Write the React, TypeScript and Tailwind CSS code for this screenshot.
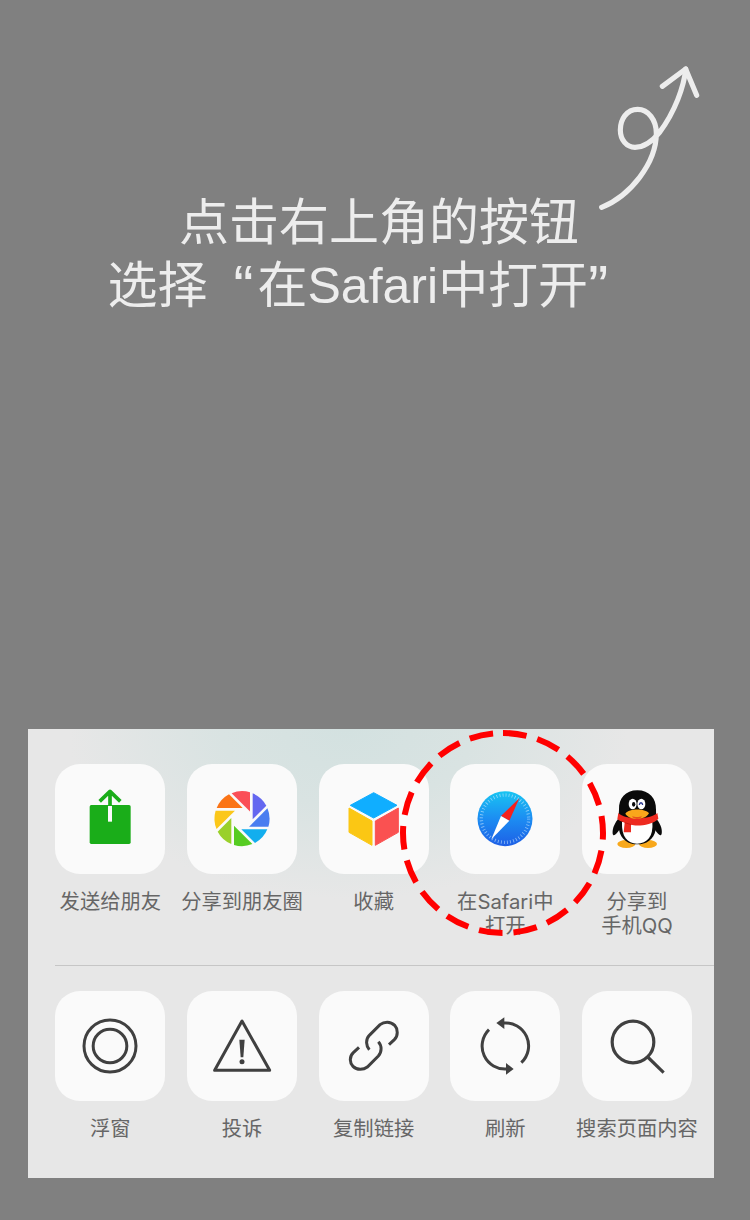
import type { ReactNode } from "react";

const BLADES = ["#6467f0", "#4a7df0", "#12aeee", "#56cc22", "#9ad02a", "#fbc71a", "#fb7416", "#fa4f57"];

function Tile({ children }: { children: ReactNode }) {
  return (
    <div className="h-[110px] w-[110px] rounded-[25px] bg-[#fafafa]">
      <svg viewBox="0 0 330 330" className="block h-full w-full" fill="none">
        {children}
      </svg>
    </div>
  );
}

function SendIcon() {
  return (
    <Tile>
      <rect x="104" y="123" width="123" height="117" rx="5" fill="#1aad19" />
      <path d="M165 84V126M134 112L165 82L196 112" stroke="#1aad19" strokeWidth="11" strokeLinejoin="round" />
      <path d="M165 126V173" stroke="#fafafa" strokeWidth="12" />
    </Tile>
  );
}

function MomentsIcon() {
  return (
    <Tile>
      {BLADES.map((color, i) => (
        <path
          key={color}
          d="M32 -76A82 82 0 0 1 73 -39L32 2Z"
          fill={color}
          transform={`translate(165 164) rotate(${i * 45})`}
        />
      ))}
    </Tile>
  );
}

function FavoriteIcon() {
  return (
    <Tile>
      <g strokeLinejoin="round" strokeWidth="3">
        <path d="M164 86L234 124L164 162L94 124Z" fill="#10aeff" stroke="#10aeff" />
        <path d="M90 132L159 171V244L90 205Z" fill="#fbc714" stroke="#fbc714" />
        <path d="M169 171L238 132V205L169 244Z" fill="#fa5151" stroke="#fa5151" />
      </g>
    </Tile>
  );
}

function SafariIcon() {
  return (
    <Tile>
      <defs>
        <linearGradient id="compass" x1="0" y1="0" x2="0" y2="1">
          <stop offset="0" stopColor="#19c5f2" />
          <stop offset="0.5" stopColor="#1c8df2" />
          <stop offset="1" stopColor="#1e5fe6" />
        </linearGradient>
      </defs>
      <circle cx="165" cy="164" r="82.5" fill="url(#compass)" />
      <circle cx="165" cy="164" r="71" stroke="#d5efff" strokeOpacity="0.6" strokeWidth="10" strokeDasharray="2.5 6.79" />
      <path d="M208 103L153 156L178 170Z" fill="#f5201d" />
      <path d="M124 226L153 156L178 170Z" fill="#ffffff" />
    </Tile>
  );
}

function QQIcon() {
  return (
    <Tile>
      <g transform="translate(-246 -131)">
        <ellipse cx="379" cy="371" rx="27" ry="12" fill="#f8a81b" />
        <ellipse cx="444" cy="371" rx="27" ry="12" fill="#f8a81b" />
        <path d="M358 292C344 306 336 326 338 340C340 350 349 342 360 326Z" fill="#0a0a0a" />
        <path d="M466 292C480 306 488 326 485 340C483 350 474 342 463 326Z" fill="#0a0a0a" />
        <path d="M412 210C376 210 356 234 357 268C356 290 354 306 357 328C362 358 386 372 412 372C438 372 462 358 467 328C470 306 468 290 468 268C469 234 448 210 412 210Z" fill="#0a0a0a" />
        <path d="M366 305C364 348 382 370 411 370C441 370 461 348 457 305Z" fill="#ffffff" />
        <path d="M355 278C374 298 448 300 472 278L475 295C456 316 408 318 393 313V336H371L374 307C364 304 356 300 352 296Z" fill="#ee2a20" />
        <path d="M374 307L394 313" stroke="#b8160f" strokeWidth="2" />
        <ellipse cx="398" cy="251" rx="12" ry="16" fill="#ffffff" />
        <ellipse cx="424" cy="251" rx="12" ry="16" fill="#ffffff" />
        <ellipse cx="401" cy="252" rx="5" ry="7" fill="#0a0a0a" />
        <path d="M418 254C419 245 427 245 428 254" stroke="#27348c" strokeWidth="4" />
        <path d="M376 280C388 264 434 264 447 279C435 301 389 301 376 280Z" fill="#f9a61b" />
        <path d="M396 288C404 291 418 291 426 288C420 299 402 299 396 288Z" fill="#e8531c" />
      </g>
    </Tile>
  );
}

function FloatIcon() {
  return (
    <Tile>
      <g stroke="#404040" strokeWidth="9">
        <circle cx="165" cy="165" r="78" />
        <circle cx="165" cy="165" r="50.5" />
      </g>
    </Tile>
  );
}

function ReportIcon() {
  return (
    <Tile>
      <path d="M165 90L83 238H248Z" stroke="#404040" strokeWidth="9" strokeLinejoin="round" />
      <path d="M157 146H173L169 199H161Z" fill="#404040" />
      <circle cx="165" cy="212" r="7.5" fill="#404040" />
    </Tile>
  );
}

function LinkIcon() {
  return (
    <Tile>
      <g transform="translate(-57 -31)" stroke="#404040" strokeWidth="9">
        <path d="M267 192L283 177C295 165 294 145 284 134C271 121 252 123 240 132L208 164C196 177 198 195 208 207" />
        <path d="M177 200L160 216C147 228 149 247 159 257C171 269 190 268 202 259L235 226C246 214 246 195 235 183" />
      </g>
    </Tile>
  );
}

function RefreshIcon() {
  return (
    <Tile>
      <g transform="translate(-451 -31)">
        <path d="M568 147A69 69 0 0 0 622 265M665 246A69 69 0 0 0 611 127" stroke="#404040" strokeWidth="9" />
        <path d="M590 127L614 110V145ZM642 265L619 247V282Z" fill="#404040" />
      </g>
    </Tile>
  );
}

function SearchIcon() {
  return (
    <Tile>
      <g transform="translate(-846 -31)" stroke="#404040" strokeWidth="9.5">
        <circle cx="999" cy="184" r="62.5" />
        <path d="M1043 229L1091 276" />
      </g>
    </Tile>
  );
}

type Action = { label: ReactNode; icon: ReactNode };

const SHARE: Action[] = [
  { label: "发送给朋友", icon: <SendIcon /> },
  { label: "分享到朋友圈", icon: <MomentsIcon /> },
  { label: "收藏", icon: <FavoriteIcon /> },
  { label: <>在Safari中<br />打开</>, icon: <SafariIcon /> },
  { label: <>分享到<br />手机QQ</>, icon: <QQIcon /> },
];

const TOOLS: Action[] = [
  { label: "浮窗", icon: <FloatIcon /> },
  { label: "投诉", icon: <ReportIcon /> },
  { label: "复制链接", icon: <LinkIcon /> },
  { label: "刷新", icon: <RefreshIcon /> },
  { label: "搜索页面内容", icon: <SearchIcon /> },
];

function Row({ actions }: { actions: Action[] }) {
  return (
    <div className="ml-[16.5px] grid w-[658.3px] grid-cols-5">
      {actions.map((action, i) => (
        <div key={i} className="flex flex-col items-center">
          {action.icon}
          <div className="mt-[16px] whitespace-nowrap text-center font-['Inter','Noto_Sans_CJK_SC',sans-serif] text-[20.3px] leading-[24px] text-[#666666]">
            {action.label}
          </div>
        </div>
      ))}
    </div>
  );
}

export default function App() {
  return (
    <div className="relative flex h-[1220px] w-[750px] flex-col bg-[#808080]">
      <svg
        viewBox="0 0 420 510"
        className="absolute top-[50px] left-[580px] h-[170px] w-[140px]"
        fill="none"
        stroke="#ededed"
        strokeWidth="15.5"
        strokeLinecap="round"
        strokeLinejoin="round"
      >
        <path d="M65 472C150 438 229 340 229 250C229 210 205 178 173 178C140 178 121 208 121 240C121 270 140 292 165 292C195 292 220 270 238 248C285 185 312 110 317 57" />
        <path d="M247 109L317 57L350 136" />
      </svg>

      <div className="flex h-[729px] flex-col pt-[187px] font-['Noto_Sans_CJK_SC',sans-serif] text-[50px] leading-[63px] whitespace-nowrap text-[#ededed]">
        <div className="h-[63px] pl-[179px]">点击右上角的按钮</div>
        <div className="h-[63px] pl-[107.5px]">
          选择
          <span className="inline-block w-[50px] pr-[4px] text-right align-[-4px] font-['Liberation_Sans',sans-serif] text-[60px] leading-none">“</span>
          在<span className="font-['Liberation_Sans',sans-serif]">Safari</span>中打开
          <span className="inline-block w-[50px] align-[-4px] font-['Liberation_Sans',sans-serif] text-[60px] leading-none">”</span>
        </div>
      </div>

      <div className="relative ml-[28px] h-[449px] w-[686px] bg-[#e7e7e7] bg-[radial-gradient(ellipse_280px_170px_at_320px_0px,#d3e1e0_0%,#d9e3e2_45%,#e7e7e700_100%)] pt-[34.7px]">
        <div className="h-[201px]">
          <Row actions={SHARE} />
        </div>
        <div className="ml-[27px] h-px bg-[#c6c6c6]" />
        <div className="pt-[25.3px]">
          <Row actions={TOOLS} />
        </div>
        <svg viewBox="0 0 206 206" className="absolute top-px left-[372px] h-[206px] w-[206px]" fill="none">
          <circle
            cx="103"
            cy="103"
            r="100"
            stroke="#ff0000"
            strokeWidth="6"
            strokeDasharray="23.8 11.107"
            transform="rotate(-90 103 103)"
          />
        </svg>
      </div>
    </div>
  );
}
